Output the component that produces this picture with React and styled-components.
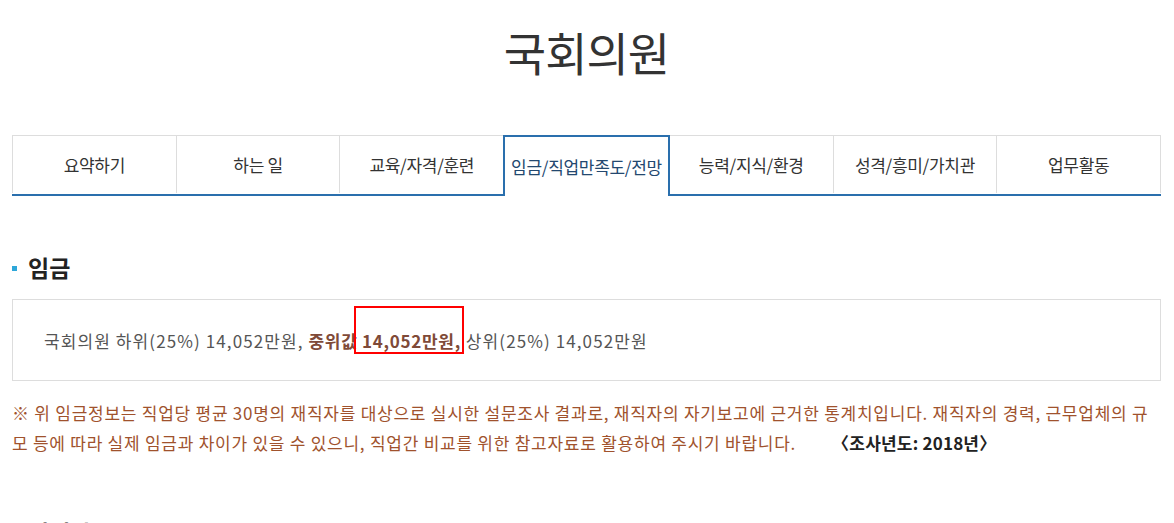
import React from "react";
import styled, { createGlobalStyle } from "styled-components";

const GlobalStyle = createGlobalStyle`
  html, body {
    margin: 0;
    padding: 0;
    background: #fff;
    overflow: hidden;
  }
  body {
    font-family: "Noto Sans CJK KR", "Noto Sans", sans-serif;
    color: #333;
  }
`;

const Page = styled.div`
  padding: 0 13px 40px 12px;
`;

const Title = styled.h1`
  margin: 0;
  padding-top: 20px;
  height: 135px;
  box-sizing: border-box;
  text-align: center;
  font-size: 46px;
  font-weight: 400;
  line-height: 62px;
  color: #333;
  letter-spacing: -1px;
`;

const Tabs = styled.ul`
  display: flex;
  list-style: none;
  margin: 0;
  padding: 0;
  border-bottom: 2px solid #2a6fad;
`;

const Tab = styled.li`
  flex: 1;
  height: 57px;
  display: flex;
  align-items: center;
  justify-content: center;
  font-size: 17px;
  letter-spacing: -0.3px;
  color: #333;
  background: #fff;
  border-top: 1px solid #ddd;
  border-left: 1px solid #ddd;
  &:last-child {
    border-right: 1px solid #ddd;
  }
  ${({ $active }) =>
    $active &&
    `
    border: 2px solid #2a6fad;
    border-bottom: none;
    height: 58px;
    margin-bottom: -2px;
    padding-bottom: 1px;
    color: #23486f;
    & + li { border-left: none; }
  `}
`;

const SectionTitle = styled.h2`
  display: flex;
  align-items: center;
  gap: 11px;
  margin: 51px 0 0;
  font-size: 23px;
  font-weight: 700;
  line-height: 40px;
  color: #222;
  &::before {
    content: "";
    width: 5px;
    height: 5px;
    background: #2ea7d9;
    margin-top: 2px;
  }
`;

const InfoBox = styled.div`
  margin-top: 12px;
  border: 1px solid #ddd;
  height: 80px;
  padding: 0 31px;
  display: flex;
  align-items: center;
  font-size: 17px;
  color: #555;
  letter-spacing: 1.1px;
`;

const Median = styled.strong`
  font-weight: 700;
  color: #7f4a38;
  letter-spacing: 0.7px;
`;

const Highlight = styled.span`
  position: relative;
  &::after {
    content: "";
    position: absolute;
    top: -22px;
    bottom: -1px;
    left: -8px;
    right: -3px;
    border: 2px solid #f00;
  }
`;

const Note = styled.p`
  margin: 17px 0 0;
  font-size: 17px;
  line-height: 30px;
  color: #a0522d;
  letter-spacing: 0.75px;
`;

const Year = styled.span`
  margin-left: 36px;
  color: #222;
  font-weight: 700;
  letter-spacing: 0.2px;
`;

const NextTitle = styled(SectionTitle)`
  margin-top: 54px;
`;

const tabs = [
  "요약하기",
  "하는 일",
  "교육/자격/훈련",
  "임금/직업만족도/전망",
  "능력/지식/환경",
  "성격/흥미/가치관",
  "업무활동",
];

export default function App() {
  return (
    <>
      <GlobalStyle />
      <Page>
        <Title>국회의원</Title>
        <Tabs>
          {tabs.map((t, i) => (
            <Tab key={t} $active={i === 3}>
              {t}
            </Tab>
          ))}
        </Tabs>
        <SectionTitle>임금</SectionTitle>
        <InfoBox>
          <span>
            국회의원 하위(25%) 14,052만원,{" "}
            <Median>
              중위값 <Highlight>14,052만원,</Highlight>
            </Median>{" "}
            상위(25%) 14,052만원
          </span>
        </InfoBox>
        <Note>
          ※ 위 임금정보는 직업당 평균 30명의 재직자를 대상으로 실시한 설문조사
          결과로, 재직자의 자기보고에 근거한 통계치입니다. 재직자의 경력,
          근무업체의 규모 등에 따라 실제 임금과 차이가 있을 수 있으니, 직업간
          비교를 위한 참고자료로 활용하여 주시기 바랍니다.
          <Year>〈조사년도: 2018년〉</Year>
        </Note>
        <NextTitle>직업만족도</NextTitle>
      </Page>
    </>
  );
}
